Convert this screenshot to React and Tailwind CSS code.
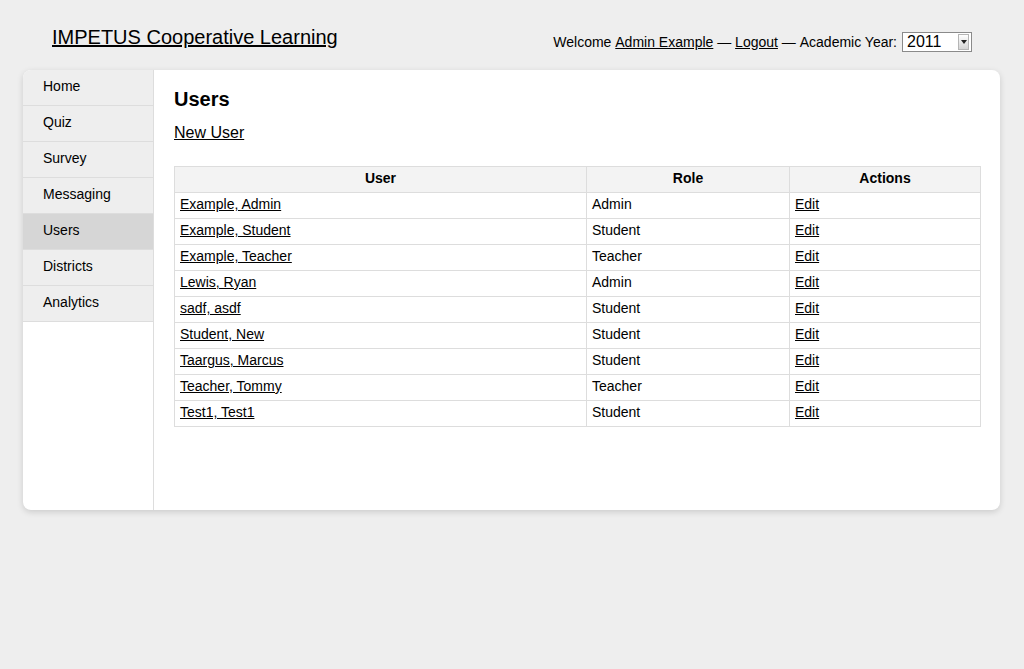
import React from 'react';

const NAV = ['Home', 'Quiz', 'Survey', 'Messaging', 'Users', 'Districts', 'Analytics'];

const USERS = [
  ['Example, Admin', 'Admin'],
  ['Example, Student', 'Student'],
  ['Example, Teacher', 'Teacher'],
  ['Lewis, Ryan', 'Admin'],
  ['sadf, asdf', 'Student'],
  ['Student, New', 'Student'],
  ['Taargus, Marcus', 'Student'],
  ['Teacher, Tommy', 'Teacher'],
  ['Test1, Test1', 'Student'],
];

function YearSelect() {
  return (
    <div className="ml-[5px] flex h-[20px] w-[70px] items-stretch border border-[#8a8a8a] bg-white">
      <span className="flex-1 pl-[4px] text-[16px] leading-[18px] text-black">2011</span>
      <span className="my-[1px] mr-[2px] flex w-[11px] items-center justify-center border border-[#b5b5b5] bg-gradient-to-b from-[#ffffff] to-[#d4d4d4]">
        <svg width="6" height="4" viewBox="0 0 6 4">
          <polygon points="0,0 6,0 3,4" fill="#222" />
        </svg>
      </span>
    </div>
  );
}

export default function App() {
  return (
    <div className="min-h-[669px] bg-[#eeeeee] font-['Liberation_Sans',Arial,sans-serif] text-black">
      {/* Header */}
      <div className="flex h-[70px] justify-between">
        <div className="pl-[52px] pt-[25px]">
          <a href="#" className="text-[20px] leading-[24px] underline">IMPETUS Cooperative Learning</a>
        </div>
        <div className="flex items-start pr-[52px] pt-[32px] text-[14px] leading-[20px]">
          <span>Welcome&nbsp;</span>
          <a href="#" className="underline">Admin Example</a>
          <span>&nbsp;—&nbsp;</span>
          <a href="#" className="underline">Logout</a>
          <span>&nbsp;—&nbsp;Academic Year:</span>
          <YearSelect />
        </div>
      </div>

      {/* Card */}
      <div className="ml-[23px] flex h-[440px] w-[977px] overflow-hidden rounded-[8px] bg-white shadow-[0_2px_6px_rgba(0,0,0,0.15)]">
        <nav className="w-[131px] shrink-0 border-r border-[#dddddd]">
          {NAV.map((item) => (
            <div
              key={item}
              className={`h-[36px] border-b border-[#dddddd] pl-[20px] pt-[7px] text-[14px] leading-[18px] ${
                item === 'Users' ? 'bg-[#d6d6d6]' : 'bg-[#eeeeee]'
              }`}
            >
              {item}
            </div>
          ))}
        </nav>

        <main className="flex-1 pl-[20px] pr-[19px] pt-[17px]">
          <h2 className="text-[20px] font-bold leading-[24px]">Users</h2>
          <a href="#" className="mt-[12px] block w-fit text-[16px] leading-[20px] underline">New User</a>

          <table className="mt-[23px] w-full border-collapse text-[14px]">
            <thead>
              <tr className="bg-[#f3f3f3]">
                <th className="w-[412px] border border-[#dddddd] pt-[2px] pb-[4px] text-center font-bold leading-[19px]">User</th>
                <th className="w-[203px] border border-[#dddddd] pt-[2px] pb-[4px] text-center font-bold leading-[19px]">Role</th>
                <th className="border border-[#dddddd] pt-[2px] pb-[4px] text-center font-bold leading-[19px]">Actions</th>
              </tr>
            </thead>
            <tbody>
              {USERS.map(([name, role]) => (
                <tr key={name}>
                  <td className="border border-[#dddddd] px-[5px] pt-[2px] pb-[4px] leading-[19px]">
                    <a href="#" className="underline">{name}</a>
                  </td>
                  <td className="border border-[#dddddd] px-[5px] pt-[2px] pb-[4px] leading-[19px]">{role}</td>
                  <td className="border border-[#dddddd] px-[5px] pt-[2px] pb-[4px] leading-[19px]">
                    <a href="#" className="underline">Edit</a>
                  </td>
                </tr>
              ))}
            </tbody>
          </table>
        </main>
      </div>
    </div>
  );
}
